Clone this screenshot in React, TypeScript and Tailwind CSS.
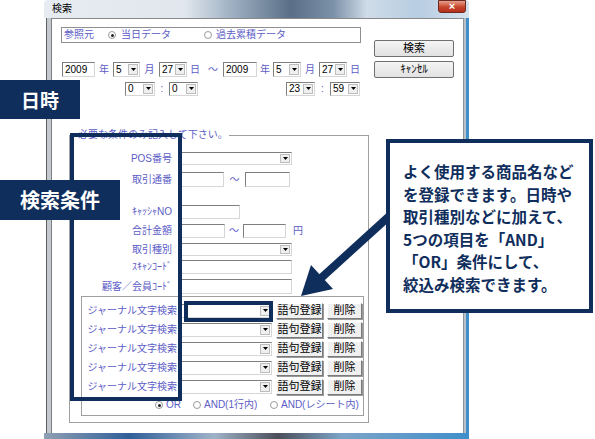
import React from "react";

const navy = "#0f2e5c";

function Select({ className, value }: { className: string; value?: string }) {
  return (
    <div className={`relative flex shrink-0 items-center bg-white border border-[#7f7f7f] border-r-[#d6d6d6] border-b-[#d6d6d6] ${className}`}>
      <span className="pl-[2px] text-black">{value}</span>
      <span className="absolute right-[1px] top-[1px] bottom-[1px] w-[10px] flex items-center justify-center bg-[#efefef] border border-[#bdbdbd]">
        <svg width="5" height="3" viewBox="0 0 5 3">
          <path d="M0 0h5L2.5 3z" fill="#000" />
        </svg>
      </span>
    </div>
  );
}

function Input({ className, value }: { className: string; value?: string }) {
  return (
    <div className={`flex shrink-0 items-center bg-white border border-[#7f7f7f] border-r-[#d6d6d6] border-b-[#d6d6d6] ${className}`}>
      <span className="pl-[2px] text-black">{value}</span>
    </div>
  );
}

function Radio({ checked }: { checked?: boolean }) {
  return (
    <span className="flex h-[8px] w-[8px] shrink-0 items-center justify-center rounded-full border border-[#9a9a9a] bg-white">
      {checked && <span className="h-[3px] w-[3px] rounded-full bg-[#222]" />}
    </span>
  );
}

function SmallButton({ className, label }: { className: string; label: string }) {
  return (
    <div className={`flex shrink-0 items-center justify-center bg-[#f0f0f0] border border-white border-r-[#7a7a7a] border-b-[#7a7a7a] shadow-[1px_1px_0_#9a9a9a] text-[11px] text-black ${className}`}>
      {label}
    </div>
  );
}

function DialogButton({ label }: { label: string }) {
  return (
    <div className="flex h-[17px] w-[80px] items-center justify-center rounded-[2px] border border-[#707070] bg-[linear-gradient(#f4f4f4,#e2e2e2)] text-[11px] text-black">
      {label}
    </div>
  );
}

function FormRow({ label, className, children }: { label: string; className: string; children: React.ReactNode }) {
  return (
    <div className={`flex items-center ${className}`}>
      <span className="w-[102px] text-right text-[#5c5cc6]">{label}</span>
      <div className="ml-[8px] flex h-full items-center">{children}</div>
    </div>
  );
}

function JournalRow() {
  return (
    <div className="flex h-[19px] items-center">
      <span className="w-[95px] text-right text-[#5c5cc6]">ジャーナル文字検索</span>
      <Select className="ml-[3px] h-[14px] w-[92px]" />
      <SmallButton className="ml-[4px] h-[16px] w-[47px]" label="語句登録" />
      <SmallButton className="ml-[4px] h-[16px] w-[35px]" label="削除" />
    </div>
  );
}

export default function App() {
  return (
    <div className="relative h-[439px] w-[595px] overflow-hidden bg-white font-['Liberation_Sans','Noto_Sans_CJK_JP',sans-serif] text-[10px] leading-none">
      {/* window */}
      <div className="ml-[44px] flex h-[439px] w-[425px] flex-col">
        <div className="flex h-[18px] items-start rounded-t-[4px] bg-[linear-gradient(to_right,#e7ecf2_0%,#e1e7ee_33%,#9aacbf_45%,#5a6f87_58%,#7b91a8_68%,#cfdbe7_76%,#b7cde2_88%,#d7e3ee_100%)]">
          <span className="ml-[8px] mt-[4px] text-black">検索</span>
          <div className="ml-auto mr-[3px] flex h-[13px] w-[28px] items-center justify-center rounded-b-[3px] border border-[#6b2a20] bg-[linear-gradient(#e8a08c,#c8452c_55%,#b5301c)] text-[11px] font-bold text-white">
            ×
          </div>
        </div>
        <div className="flex min-h-0 flex-1">
          <div className="flex w-[8px]">
            <span className="ml-[2px] w-[1px] bg-[#5e5e5e]" />
            <span className="w-[4px] bg-[#c3c9cf]" />
            <span className="w-[1px] bg-[#808080]" />
          </div>
          {/* client */}
          <div className="flex w-[411px] flex-col border-t border-[#8a8a8a] bg-white">
            <div className="-mt-[1px] flex pl-[9px]">
              <div className="flex w-[300px] flex-col">
                <div className="mt-[9px] flex h-[16px] items-center border border-[#8f8f8f]">
                  <span className="ml-[2px] w-[44px] text-[#5c5cc6]">参照元</span>
                  <div className="flex w-[96px] items-center">
                    <Radio checked />
                    <span className="ml-[5px] text-[#5c5cc6]">当日データ</span>
                  </div>
                  <div className="flex items-center">
                    <Radio />
                    <span className="ml-[4px] text-[#5c5cc6]">過去累積データ</span>
                  </div>
                </div>
                <div className="ml-[1px] mt-[19px] flex h-[15px] w-max items-center text-[#5c5cc6]">
                  <Input className="h-[15px] w-[33px]" value="2009" />
                  <span className="w-[18px] text-center">年</span>
                  <Select className="h-[15px] w-[27px]" value="5" />
                  <span className="w-[19px] text-center">月</span>
                  <Select className="h-[15px] w-[28px]" value="27" />
                  <span className="w-[16px] text-center">日</span>
                  <span className="w-[20px] text-center">～</span>
                  <Input className="h-[15px] w-[34px]" value="2009" />
                  <span className="w-[16px] text-center">年</span>
                  <Select className="h-[15px] w-[28px]" value="5" />
                  <span className="w-[18px] text-center">月</span>
                  <Select className="h-[15px] w-[28px]" value="27" />
                  <span className="w-[16px] text-center">日</span>
                </div>
                <div className="ml-[64px] mt-[5px] flex h-[13px] w-max items-center text-[#5c5cc6]">
                  <Select className="h-[14px] w-[30px]" value="0" />
                  <span className="w-[14px] text-center">:</span>
                  <Select className="h-[14px] w-[29px]" value="0" />
                  <span className="w-[88px]" />
                  <Select className="h-[14px] w-[29px]" value="23" />
                  <span className="w-[15px] text-center">:</span>
                  <Select className="h-[14px] w-[30px]" value="59" />
                </div>
              </div>
              <div className="ml-[13px] mt-[22px] flex flex-col gap-[4px]">
                <DialogButton label="検索" />
                <DialogButton label="ｷｬﾝｾﾙ" />
              </div>
            </div>

            {/* conditions group */}
            <div className="relative ml-[17px] mt-[40px] flex h-[288px] w-[300px] flex-col border border-[#a0a0a0]">
              <span className="absolute -top-[6px] left-[7px] bg-white px-[1px] text-[#5c5cc6]">必要な条件のみ記入して下さい。</span>
              <FormRow label="POS番号" className="mt-[16px] h-[13px]">
                <Select className="h-[13px] w-[112px]" />
              </FormRow>
              <FormRow label="取引通番" className="mt-[7px] h-[15px]">
                <Input className="h-[15px] w-[44px]" />
                <span className="w-[21px] text-center text-[#5c5cc6]">～</span>
                <Input className="h-[15px] w-[45px]" />
              </FormRow>
              <FormRow label="ｷｬｯｼｬNO" className="mt-[18px] h-[14px]">
                <Input className="h-[14px] w-[60px]" />
              </FormRow>
              <FormRow label="合計金額" className="mt-[5px] h-[14px]">
                <Input className="h-[14px] w-[45px]" />
                <span className="w-[18px] text-center text-[#5c5cc6]">～</span>
                <Input className="h-[14px] w-[43px]" />
                <span className="ml-[7px] text-[#5c5cc6]">円</span>
              </FormRow>
              <FormRow label="取引種別" className="mt-[5px] h-[13px]">
                <Select className="h-[13px] w-[112px]" />
              </FormRow>
              <FormRow label="ｽｷｬﾝｺｰﾄﾞ" className="mt-[4px] h-[14px]">
                <Input className="h-[14px] w-[112px]" />
              </FormRow>
              <FormRow label="顧客／会員ｺｰﾄﾞ" className="mt-[5px] h-[15px]">
                <Input className="h-[15px] w-[112px]" />
              </FormRow>

              <div className="ml-[11px] mt-[2px] flex h-[120px] w-[283px] flex-col border border-[#a0a0a0] pt-[4px]">
                <JournalRow />
                <JournalRow />
                <JournalRow />
                <JournalRow />
                <JournalRow />
                <div className="flex h-[18px] items-center text-[#5c5cc6]">
                  <div className="ml-[73px] flex w-[38px] items-center">
                    <Radio checked />
                    <span className="ml-[3px]">OR</span>
                  </div>
                  <div className="flex w-[77px] items-center">
                    <Radio />
                    <span className="ml-[3px]">AND(1行内)</span>
                  </div>
                  <div className="flex items-center">
                    <Radio />
                    <span className="ml-[3px]">AND(レシート内)</span>
                  </div>
                </div>
              </div>
            </div>
          </div>
          <div className="flex w-[6px]">
            <span className="w-[1px] bg-[#8d959d]" />
            <span className="w-[2px] bg-[#b9c0c7]" />
            <span className="w-[3px] bg-[#3f8fca]" />
          </div>
        </div>
        <div className="h-[6px] bg-[linear-gradient(to_right,#8fa0b3,#2f5f99_20%,#9fb3c8_40%,#4b4f5a_55%,#7ca4c8_70%,#3f8fca_100%)]" />
      </div>

      {/* annotations */}
      <div className="absolute left-[70px] top-[133px] h-[268px] w-[112px] border-4 border-[#0f2e5c]" />
      <div className="absolute left-[184px] top-[301px] h-[21px] w-[89px] border-4 border-[#0f2e5c]" />
      <div className="absolute left-0 top-[80px] flex h-[39px] w-[80px] items-center justify-center bg-[#0f2e5c] font-['Noto_Sans_CJK_JP',sans-serif] text-[19px] font-bold text-white">
        日時
      </div>
      <div className="absolute left-0 top-[180px] flex h-[40px] w-[120px] items-center justify-center bg-[#0f2e5c] font-['Noto_Sans_CJK_JP',sans-serif] text-[20px] font-bold text-white">
        検索条件
      </div>

      <svg className="absolute left-[290px] top-[200px]" width="110" height="100" viewBox="0 0 110 100">
        <line x1="106" y1="10" x2="30" y2="79" stroke={navy} strokeWidth="8" />
        <polygon points="11,96 21,65 43,89" fill={navy} />
      </svg>

      <div className="absolute left-[386px] top-[139px] h-[174px] w-[207px] border-4 border-[#0f2e5c] bg-white pl-[13px] pt-[17px] font-['Noto_Sans_CJK_JP',sans-serif] text-[15.5px] font-bold leading-[22.6px] whitespace-nowrap text-[#0f2e5c]">
        よく使用する商品名など
        <br />
        を登録できます。日時や
        <br />
        取引種別などに加えて、
        <br />
        5つの項目を「AND」
        <br />
        「OR」条件にして、
        <br />
        絞込み検索できます。
      </div>
    </div>
  );
}
